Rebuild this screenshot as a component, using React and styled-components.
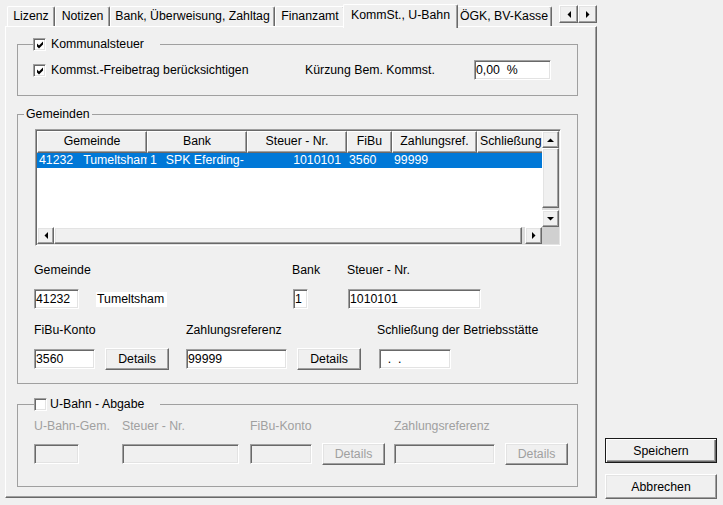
import React from 'react';
import styled, { createGlobalStyle, css } from 'styled-components';

const Global = createGlobalStyle`
  html, body { margin: 0; padding: 0; background: #f0f0f0; }
  body {
    font-family: "Liberation Sans", Arial, sans-serif;
    font-size: 12.3px;
    color: #000;
  }
  * { box-sizing: border-box; }
`;

const sunken = css`
  border-style: solid;
  border-width: 1px;
  border-color: #a0a0a0 #fff #fff #a0a0a0;
  box-shadow: inset 1px 1px 0 #696969, inset -1px -1px 0 #e3e3e3;
`;

const raised = css`
  border-style: solid;
  border-width: 1px;
  border-color: #fff #696969 #696969 #fff;
  box-shadow: inset -1px -1px 0 #a0a0a0, inset 1px 1px 0 #e3e3e3;
`;

const Page = styled.div`
  display: flex;
  width: 723px;
  height: 505px;
  padding: 4px 0 0 5px;
  gap: 8px;
  overflow: hidden;
`;

const TabControl = styled.div`
  width: 592px;
  height: 494px;
  flex-shrink: 0;
  display: flex;
  flex-direction: column;
`;

const TabStrip = styled.div`
  height: 22px;
  display: flex;
  align-items: flex-end;
  padding-left: 2px;
  position: relative;
  z-index: 1;
`;

const Tab = styled.div`
  width: ${(p) => p.$w}px;
  height: ${(p) => (p.$active ? 24 : 20)}px;
  margin: 0 ${(p) => (p.$active ? -2 : 0)}px ${(p) => (p.$active ? -2 : 0)}px;
  padding-top: ${(p) => (p.$active ? 1 : 0)}px;
  position: relative;
  z-index: ${(p) => (p.$active ? 2 : 0)};
  background: #f0f0f0;
  border-top: 1px solid #fff;
  border-left: 1px solid #fff;
  border-right: 1px solid #696969;
  box-shadow: inset -1px 0 0 #a0a0a0;
  border-radius: 2px 2px 0 0;
  text-align: center;
  line-height: 19px;
  white-space: nowrap;
  overflow: hidden;
`;

const TabArrows = styled.div`
  margin-left: auto;
  align-self: flex-start;
  margin-top: 1px;
  display: flex;
`;

const ArrowButton = styled.div`
  width: ${(p) => p.$w}px;
  height: ${(p) => p.$h}px;
  background: #f0f0f0;
  ${raised};
  display: flex;
  align-items: center;
  justify-content: center;
  flex-shrink: 0;
`;

const Panel = styled.div`
  flex: 1;
  border-top: 1px solid #fff;
  border-left: 1px solid #fff;
  border-right: 1px solid #696969;
  border-bottom: 1px solid #696969;
  box-shadow: inset -1px -1px 0 #a0a0a0;
  padding: 10px 0 0 11px;
  display: flex;
  flex-direction: column;
`;

const Group = styled.fieldset`
  margin: ${(p) => p.$mt || 0}px 0 0 0;
  padding: 0;
  width: 561px;
  min-width: 0;
  border: 1px solid #a0a0a0;
`;

const GroupTitle = styled.legend`
  margin-left: ${(p) => p.$ml}px;
  padding: 0 ${(p) => p.$pr}px 0 ${(p) => p.$pl}px;
  height: 14px;
  line-height: 14px;
`;

const TitleInner = styled.span`
  display: inline-flex;
  align-items: center;
  gap: ${(p) => p.$gap || 0}px;
  height: 14px;
  white-space: nowrap;
`;

const GroupBody = styled.div`
  padding: ${(p) => p.$pad};
  display: flex;
  flex-direction: column;
`;

const CheckBox = styled.span`
  display: inline-flex;
  width: 13px;
  height: 13px;
  flex-shrink: 0;
  background: #fff;
  ${sunken};
  align-items: center;
  justify-content: center;
`;

const OptionRow = styled.div`
  display: grid;
  grid-template-columns: 272px 169px 77px;
  align-items: center;
  height: 20px;
`;

const CheckLabel = styled.span`
  display: inline-flex;
  align-items: center;
  gap: 5px;
  white-space: nowrap;
`;

const Label = styled.span`
  line-height: 14px;
  white-space: nowrap;
  color: ${(p) => (p.$disabled ? '#a0a0a0' : '#000')};
`;

const Edit = styled.div`
  width: ${(p) => p.$w}px;
  height: 20px;
  flex-shrink: 0;
  margin-left: ${(p) => p.$ml || 0}px;
  ${sunken};
  padding: 0 1px;
  background: ${(p) => (p.$disabled ? '#f0f0f0' : '#fff')};
  line-height: 18px;
  white-space: pre;
  overflow: hidden;
`;

const StaticText = styled.span`
  width: ${(p) => p.$w}px;
  height: 15px;
  background: #fff;
  padding-left: 1px;
  line-height: 15px;
  white-space: nowrap;
`;

const Btn = styled.button`
  width: ${(p) => p.$w}px;
  height: ${(p) => p.$h || 22}px;
  flex-shrink: 0;
  margin: 0;
  padding: 0;
  font: inherit;
  color: ${(p) => (p.disabled ? '#a0a0a0' : '#000')};
  background: #f0f0f0;
  ${raised};
  ${(p) =>
    p.$default &&
    css`
      border: 1px solid #1a1a1a;
      box-shadow: inset 1px 1px 0 #fff, inset -1px -1px 0 #696969, inset -2px -2px 0 #a0a0a0;
    `}
`;

const FieldRow = styled.div`
  display: grid;
  grid-template-columns: ${(p) => p.$cols};
  margin-top: ${(p) => p.$mt || 0}px;
  align-items: start;
`;

const Field = styled.div`
  display: flex;
  flex-direction: column;
  align-items: flex-start;
  gap: ${(p) => p.$gap}px;
  margin-left: ${(p) => p.$ml || 0}px;
`;

const Controls = styled.div`
  display: flex;
  align-items: center;
  gap: ${(p) => (p.$gap == null ? 10 : p.$gap)}px;
  height: ${(p) => p.$h || 20}px;
`;

/* ---------- list view ---------- */

const ListView = styled.div`
  margin-left: 1px;
  width: 526px;
  height: 117px;
  background: #fff;
  ${sunken};
  padding: 1px;
  display: grid;
  grid-template-columns: 1fr 17px;
  grid-template-rows: 1fr 17px;
`;

const ListContent = styled.div`
  overflow: hidden;
  min-width: 0;
`;

const cols = '110px 100px 100px 45px 85px 100px';

const HeaderRow = styled.div`
  display: grid;
  grid-template-columns: ${cols};
  height: 22px;
`;

const HeaderCell = styled.div`
  background: #f0f0f0;
  border-style: solid;
  border-width: 1px;
  border-color: #fff #696969 #696969 #fff;
  box-shadow: inset -1px -1px 0 #a0a0a0;
  line-height: 19px;
  text-align: ${(p) => p.$align || 'center'};
  padding-left: ${(p) => p.$pl || 0}px;
  white-space: nowrap;
  overflow: hidden;
`;

const DataRow = styled.div`
  display: grid;
  grid-template-columns: ${cols};
  height: 15px;
  background: ${(p) => (p.$selected ? '#0078d7' : 'transparent')};
  color: ${(p) => (p.$selected ? '#fff' : '#000')};
  line-height: 15px;
`;

const Cell = styled.div`
  display: flex;
  justify-content: ${(p) => (p.$right ? 'flex-end' : 'flex-start')};
  gap: ${(p) => p.$gap || 0}px;
  padding: 0 ${(p) => p.$pr || 0}px 0 ${(p) => p.$pl || 0}px;
  white-space: nowrap;
  overflow: hidden;
`;

const VScroll = styled.div`
  display: flex;
  flex-direction: column;
  background: #dcdcdc;
`;

const HScroll = styled.div`
  display: flex;
  background: #dcdcdc;
`;

const Thumb = styled.div`
  ${(p) => (p.$vertical ? `height: ${p.$size}px;` : `width: ${p.$size}px;`)}
  flex-shrink: 0;
  background: #f0f0f0;
  ${raised};
`;

const Track = styled.div`
  flex: 1;
`;

const Corner = styled.div`
  background: #d0d0d0;
`;

const SideButtons = styled.div`
  align-self: flex-end;
  display: flex;
  flex-direction: column;
  gap: 11px;
  padding-bottom: 6px;
`;

/* ---------- icons ---------- */

const Arrow = ({ dir }) => {
  const pts = {
    up: '0,4 7,4 3.5,0.5',
    down: '0,0 7,0 3.5,3.5',
    left: '4,0 4,7 0.5,3.5',
    right: '0,0 0,7 3.5,3.5',
  }[dir];
  const vertical = dir === 'up' || dir === 'down';
  return (
    <svg width={vertical ? 7 : 4} height={vertical ? 4 : 7} viewBox={vertical ? '0 0 7 4' : '0 0 4 7'}>
      <polygon points={pts} fill="#000" />
    </svg>
  );
};

const Check = ({ checked }) => (
  <CheckBox>
    {checked && (
      <svg width="9" height="9" viewBox="0 0 9 9" style={{ marginLeft: 1, marginTop: 1 }}>
        <polygon points="1,3.5 3,5.5 7,1.5 7,4.5 3,8.5 1,6.5" fill="#000" />
      </svg>
    )}
  </CheckBox>
);

const tabs = [
  { label: 'Lizenz', w: 48 },
  { label: 'Notizen', w: 55 },
  { label: 'Bank, Überweisung, Zahltag', w: 165 },
  { label: 'Finanzamt', w: 70 },
  { label: 'KommSt., U-Bahn', w: 115, active: true },
  { label: 'ÖGK, BV-Kasse', w: 96 },
];

export default function App() {
  return (
    <>
      <Global />
      <Page>
        <TabControl>
          <TabStrip>
            {tabs.map((t) => (
              <Tab key={t.label} $w={t.w} $active={t.active}>
                {t.label}
              </Tab>
            ))}
            <TabArrows>
              <ArrowButton $w={19} $h={18}>
                <Arrow dir="left" />
              </ArrowButton>
              <ArrowButton $w={19} $h={18}>
                <Arrow dir="right" />
              </ArrowButton>
            </TabArrows>
          </TabStrip>

          <Panel>
            <Group>
              <GroupTitle $ml={15} $pl={0} $pr={16}>
                <TitleInner $gap={5}>
                  <Check checked />
                  Kommunalsteuer
                </TitleInner>
              </GroupTitle>
              <GroupBody $pad="9px 0 15px 15px">
                <OptionRow>
                  <CheckLabel>
                    <Check checked />
                    Kommst.-Freibetrag berücksichtigen
                  </CheckLabel>
                  <Label>Kürzung Bem. Kommst.</Label>
                  <Edit $w={77}>{'0,00  %'}</Edit>
                </OptionRow>
              </GroupBody>
            </Group>

            <Group $mt={11}>
              <GroupTitle $ml={6} $pl={2} $pr={2}>
                <TitleInner>Gemeinden</TitleInner>
              </GroupTitle>
              <GroupBody $pad="8px 0 13px 16px">
                <ListView>
                  <ListContent>
                    <HeaderRow>
                      <HeaderCell>Gemeinde</HeaderCell>
                      <HeaderCell>Bank</HeaderCell>
                      <HeaderCell>Steuer - Nr.</HeaderCell>
                      <HeaderCell>FiBu</HeaderCell>
                      <HeaderCell>Zahlungsref.</HeaderCell>
                      <HeaderCell $align="left" $pl={2}>Schließung</HeaderCell>
                    </HeaderRow>
                    <DataRow $selected>
                      <Cell $pl={2} $gap={10}>
                        <span>41232</span>
                        <span>Tumeltsham</span>
                      </Cell>
                      <Cell $pl={3} $gap={9}>
                        <span>1</span>
                        <span>SPK Eferding-</span>
                      </Cell>
                      <Cell $right $pr={6}>1010101</Cell>
                      <Cell $pl={2}>3560</Cell>
                      <Cell $pl={2}>99999</Cell>
                      <Cell $pl={2}></Cell>
                    </DataRow>
                  </ListContent>
                  <VScroll>
                    <ArrowButton $w={17} $h={17}>
                      <Arrow dir="up" />
                    </ArrowButton>
                    <Thumb $vertical $size={60} />
                    <Track />
                    <ArrowButton $w={17} $h={17}>
                      <Arrow dir="down" />
                    </ArrowButton>
                  </VScroll>
                  <HScroll>
                    <ArrowButton $w={17} $h={17}>
                      <Arrow dir="left" />
                    </ArrowButton>
                    <Thumb $size={468} />
                    <Track />
                    <ArrowButton $w={17} $h={17}>
                      <Arrow dir="right" />
                    </ArrowButton>
                  </HScroll>
                  <Corner />
                </ListView>

                <FieldRow $cols="258px 55px 1fr" $mt={17}>
                  <Field $gap={12}>
                    <Label>Gemeinde</Label>
                    <Controls $gap={17}>
                      <Edit $w={45}>41232</Edit>
                      <StaticText $w={71}>Tumeltsham</StaticText>
                    </Controls>
                  </Field>
                  <Field $gap={12}>
                    <Label>Bank</Label>
                    <Controls>
                      <Edit $w={15} $ml={1}>1</Edit>
                    </Controls>
                  </Field>
                  <Field $gap={12}>
                    <Label>Steuer - Nr.</Label>
                    <Controls>
                      <Edit $w={133} $ml={1}>1010101</Edit>
                    </Controls>
                  </Field>
                </FieldRow>

                <FieldRow $cols="152px 191px 1fr" $mt={14}>
                  <Field $gap={11}>
                    <Label>FiBu-Konto</Label>
                    <Controls $h={22}>
                      <Edit $w={61}>3560</Edit>
                      <Btn $w={64}>Details</Btn>
                    </Controls>
                  </Field>
                  <Field $gap={11}>
                    <Label>Zahlungsreferenz</Label>
                    <Controls $h={22}>
                      <Edit $w={101}>99999</Edit>
                      <Btn $w={64}>Details</Btn>
                    </Controls>
                  </Field>
                  <Field $gap={11}>
                    <Label>Schließung der Betriebsstätte</Label>
                    <Controls $h={22}>
                      <Edit $w={72} $ml={2}>{'  .  .'}</Edit>
                    </Controls>
                  </Field>
                </FieldRow>
              </GroupBody>
            </Group>

            <Group $mt={13}>
              <GroupTitle $ml={16} $pl={0} $pr={16}>
                <TitleInner $gap={3}>
                  <Check />
                  U-Bahn - Abgabe
                </TitleInner>
              </GroupTitle>
              <GroupBody $pad="8px 0 21px 16px">
                <FieldRow $cols="88px 128px 144px 1fr">
                  <Field $gap={10}>
                    <Label $disabled>U-Bahn-Gem.</Label>
                    <Controls $h={22}>
                      <Edit $w={45} $disabled />
                    </Controls>
                  </Field>
                  <Field $gap={10}>
                    <Label $disabled>Steuer - Nr.</Label>
                    <Controls $h={22}>
                      <Edit $w={117} $disabled />
                    </Controls>
                  </Field>
                  <Field $gap={10}>
                    <Label $disabled>FiBu-Konto</Label>
                    <Controls $h={22}>
                      <Edit $w={62} $disabled />
                      <Btn $w={63} disabled>Details</Btn>
                    </Controls>
                  </Field>
                  <Field $gap={10}>
                    <Label $disabled>Zahlungsreferenz</Label>
                    <Controls $h={22}>
                      <Edit $w={101} $disabled />
                      <Btn $w={63} disabled>Details</Btn>
                    </Controls>
                  </Field>
                </FieldRow>
              </GroupBody>
            </Group>
          </Panel>
        </TabControl>

        <SideButtons>
          <Btn $w={112} $h={25} $default>Speichern</Btn>
          <Btn $w={112} $h={25}>Abbrechen</Btn>
        </SideButtons>
      </Page>
    </>
  );
}
